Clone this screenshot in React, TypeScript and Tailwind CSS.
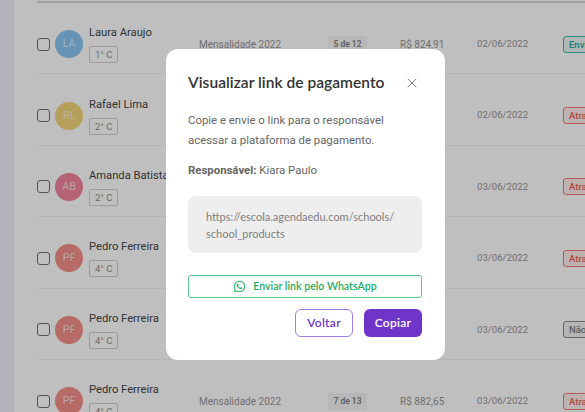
import { X } from "lucide-react";
import { FaWhatsapp } from "react-icons/fa";

type Row = {
  name: string;
  initials: string;
  grade: string;
  color: string;
  parcel: string;
  value: string;
  date: string;
  status: "sent" | "late" | "none";
};

const rows: Row[] = [
  { name: "Laura Araujo", initials: "LA", grade: "1° C", color: "bg-[#8ac5f2]", parcel: "5 de 12", value: "R$ 824,91", date: "02/06/2022", status: "sent" },
  { name: "Rafael Lima", initials: "RL", grade: "2° C", color: "bg-[#f2d479]", parcel: "8 de 12", value: "R$ 824,91", date: "02/06/2022", status: "late" },
  { name: "Amanda Batista", initials: "AB", grade: "2° C", color: "bg-[#f0849f]", parcel: "3 de 12", value: "R$ 882,65", date: "03/06/2022", status: "late" },
  { name: "Pedro Ferreira", initials: "PF", grade: "4° C", color: "bg-[#f48f8a]", parcel: "6 de 13", value: "R$ 882,65", date: "03/06/2022", status: "late" },
  { name: "Pedro Ferreira", initials: "PF", grade: "4° C", color: "bg-[#f48f8a]", parcel: "6 de 13", value: "R$ 882,65", date: "03/06/2022", status: "none" },
  { name: "Pedro Ferreira", initials: "PF", grade: "4° C", color: "bg-[#f48f8a]", parcel: "7 de 13", value: "R$ 882,65", date: "03/06/2022", status: "late" },
];

function StatusBadge({ status }: { status: Row["status"] }) {
  if (status === "sent") {
    return <span className="shrink-0 rounded-[3px] border border-[#3fb8ae] bg-[#e8f6f5] px-[5px] h-[17px] leading-[15px] text-[9.5px] font-medium text-[#2ba89e] whitespace-nowrap">Enviado</span>;
  }
  if (status === "late") {
    return <span className="shrink-0 rounded-[3px] border border-[#f07a75] bg-[#fdeeed] px-[5px] h-[17px] leading-[15px] text-[9.5px] font-medium text-[#ee5f5a] whitespace-nowrap">Atrasado</span>;
  }
  return <span className="shrink-0 rounded-[3px] border border-[#8a8a8a] bg-[#f2f2f2] px-[5px] h-[17px] leading-[15px] text-[9.5px] font-medium text-[#808080] whitespace-nowrap">Não pago</span>;
}

function TableRow({ row }: { row: Row }) {
  return (
    <div className="flex h-[71.4px] w-[560px] items-center border-b border-[#f2f2f2] pt-3">
      <span className="h-[13px] w-[13px] shrink-0 rounded-[3px] border-[1.5px] border-[#6e6e6e]" />
      <span className={`ml-[5px] flex h-7 w-7 shrink-0 items-center justify-center rounded-full text-[10.5px] text-white/70 ${row.color}`}>
        {row.initials}
      </span>
      <div className="ml-[6px] flex w-[110px] shrink-0 flex-col items-start">
        <span className="text-[11.2px] leading-[16px] text-[#444444]">{row.name}</span>
        <span className="mt-[5px] rounded-[2px] border border-[#cfcfcf] px-[5px] text-[9.5px] leading-[15px] text-[#8f8f8f]">{row.grade}</span>
      </div>
      <span className="w-[129px] shrink-0 text-[10px] text-[#959595]">Mensalidade 2022</span>
      <span className="h-[17px] w-[39px] shrink-0 rounded-[2px] bg-[#f5f5f5] text-center text-[8.5px] leading-[17px] font-semibold text-[#808080]">{row.parcel}</span>
      <span className="ml-[33px] w-[77px] shrink-0 text-[10px] text-[#959595]">{row.value}</span>
      <span className="w-[86px] shrink-0 text-[9.6px] text-[#959595]">{row.date}</span>
      <StatusBadge status={row.status} />
    </div>
  );
}

export default function App() {
  return (
    <div className="relative flex h-[412px] w-[585px] overflow-hidden bg-white font-['Roboto',sans-serif]">
      <aside className="w-[14px] shrink-0 bg-[#eff1f7]" />
      <main className="min-w-0 flex-1 pl-[23px] pt-[1px]">
        <div className="h-[2px] w-[560px] bg-[#d5d5d5]" />
        {rows.map((row, i) => (
          <TableRow key={i} row={row} />
        ))}
      </main>

      <div className="absolute inset-0 bg-black/25" />

      <section className="absolute left-[166px] top-[49px] flex h-[311px] w-[279px] flex-col rounded-xl bg-white pl-[22px] pr-[23px] pt-[23px]">
        <div className="flex h-[22px] items-center justify-between pr-[2px]">
          <h2 className="font-['Lato',sans-serif] text-[15.5px] font-semibold tracking-[0.05px] text-[#333333]">Visualizar link de pagamento</h2>
          <X className="h-4 w-4 text-[#666666]" strokeWidth={1.25} />
        </div>
        <p className="mt-[16px] text-[11.4px] leading-[20px] text-[#666666]">
          Copie e envie o link para o responsável<br />acessar a plataforma de pagamento.
        </p>
        <p className="mt-[10px] text-[11.4px] leading-[20px] text-[#666666]">
          <strong className="font-bold">Responsável:</strong> Kiara Paulo
        </p>
        <div className="mt-[16px] h-[57px] rounded-lg bg-[#eeeeee] px-[18px] py-[12px] font-['Lato',sans-serif] text-[11px] leading-[17px] text-[#808080]">
          https://escola.agendaedu.com/schools/<br />school_products
        </div>
        <button className="mt-[22px] flex h-[23px] items-center justify-center gap-[7px] rounded-[3px] border border-[#5cc990] font-['Lato',sans-serif] text-[10.6px] font-semibold text-[#1fae5e]">
          <FaWhatsapp className="h-[13px] w-[13px]" />
          Enviar link pelo WhatsApp
        </button>
        <div className="mt-[11px] flex justify-end gap-[11px]">
          <button className="h-[28px] w-[58px] rounded-[6px] border border-[#a07ce8] font-['Lato',sans-serif] text-[12px] font-semibold tracking-[0.3px] text-[#6f35c9]">Voltar</button>
          <button className="h-[28px] w-[58px] rounded-[6px] bg-[#6f35c9] font-['Lato',sans-serif] text-[12px] font-semibold tracking-[0.3px] text-white">Copiar</button>
        </div>
      </section>
    </div>
  );
}
